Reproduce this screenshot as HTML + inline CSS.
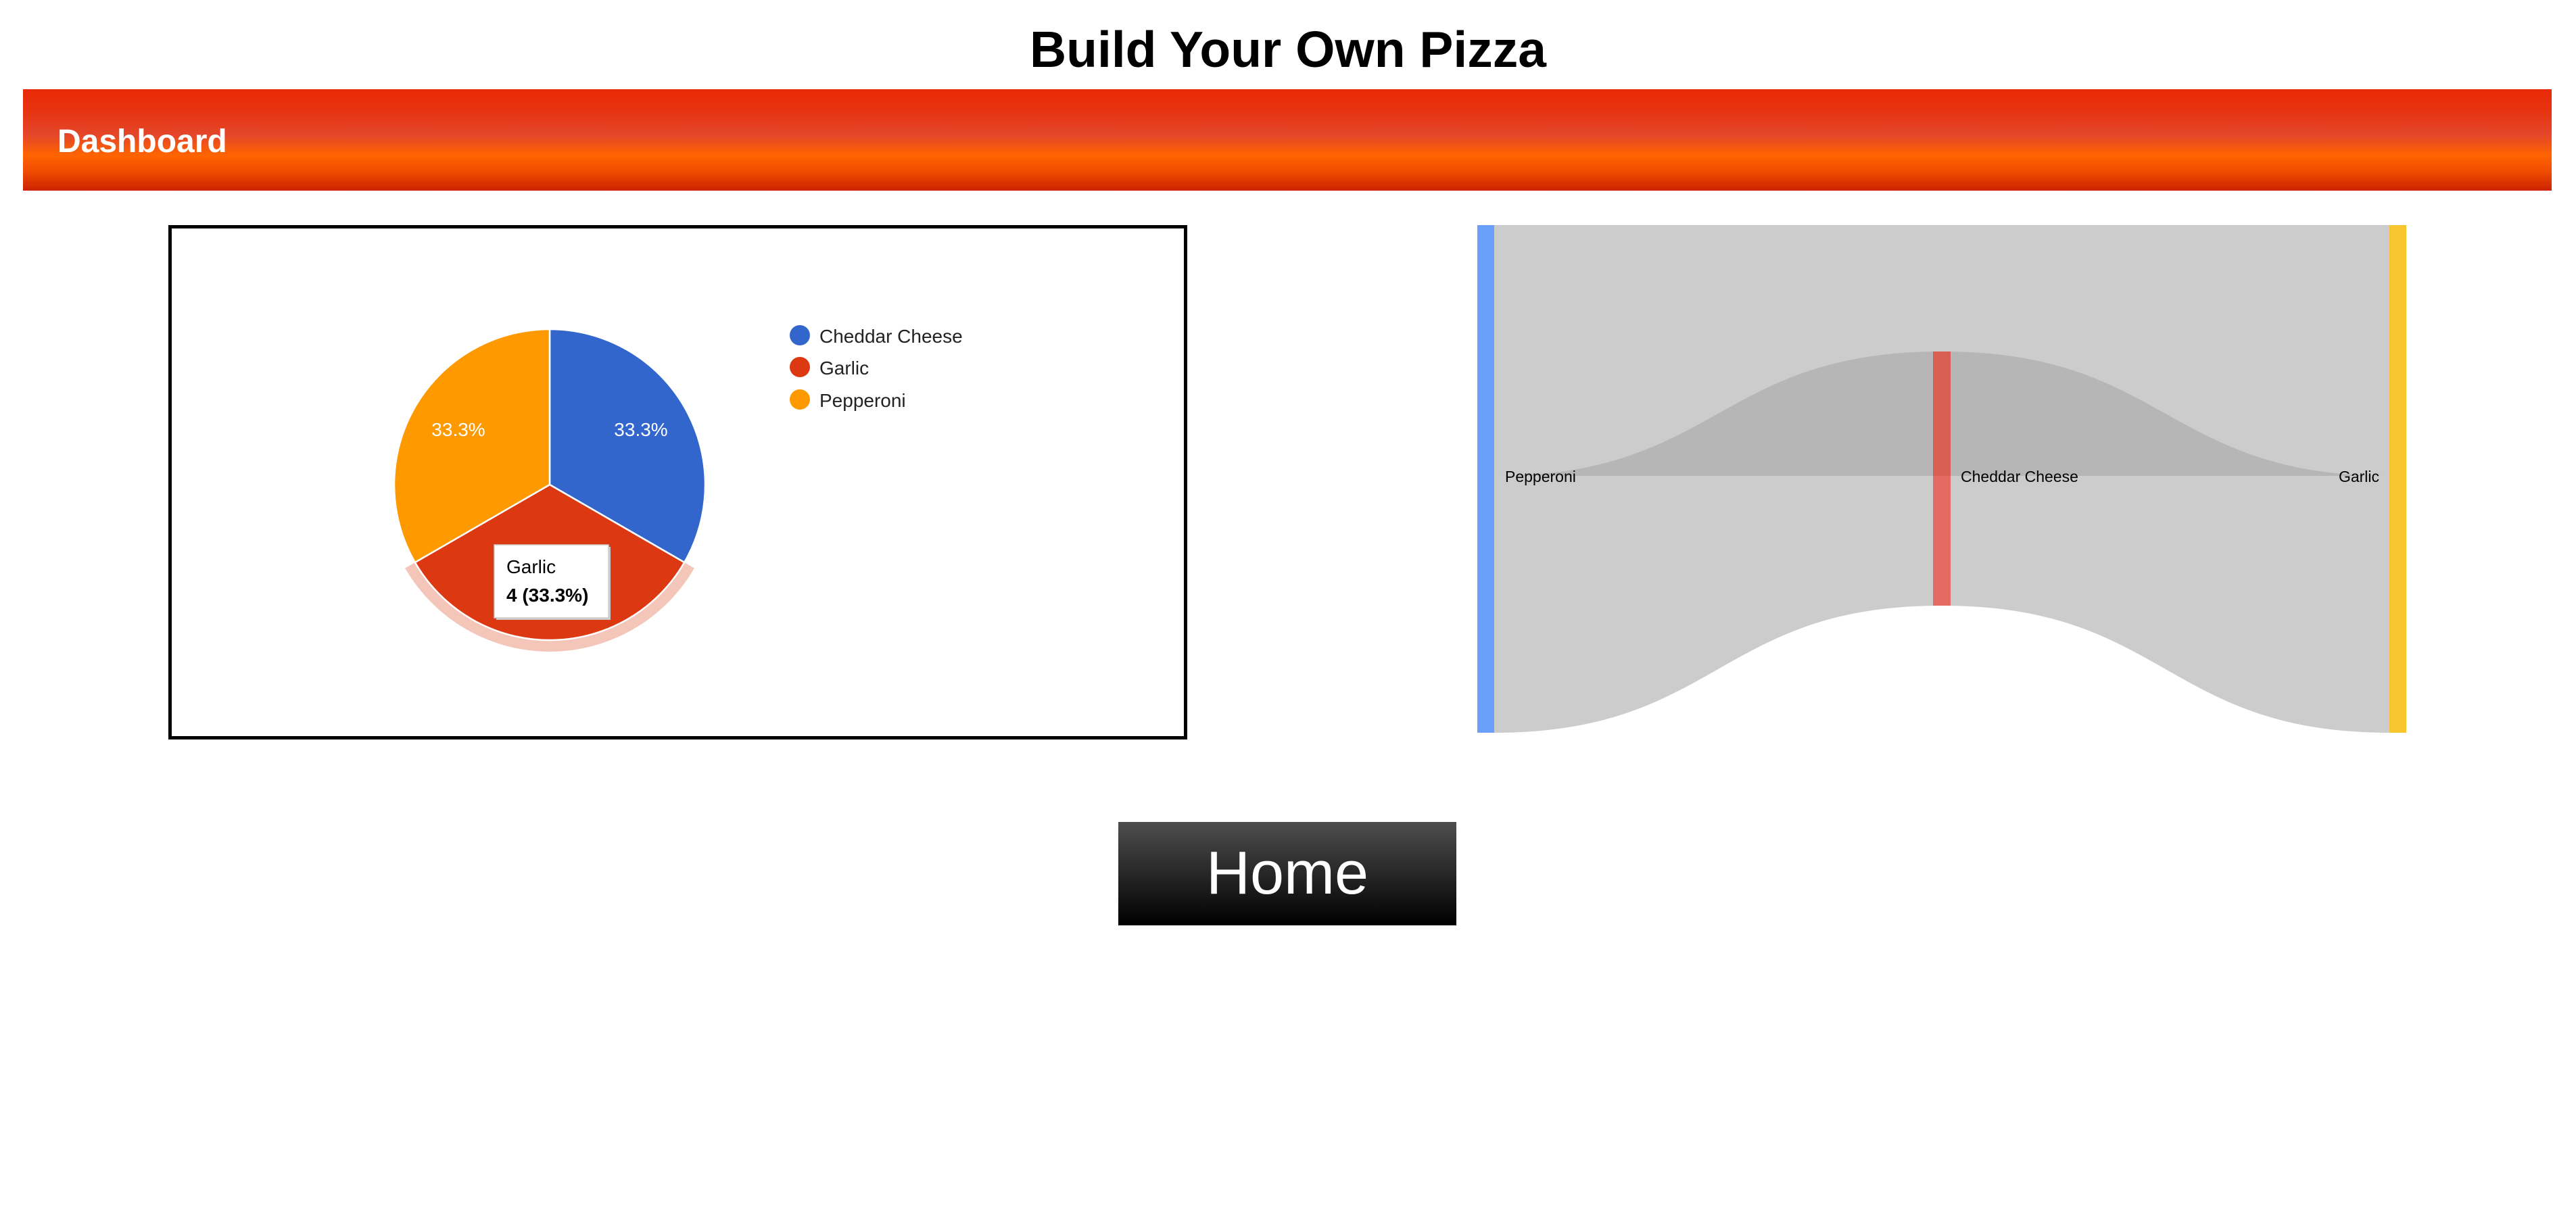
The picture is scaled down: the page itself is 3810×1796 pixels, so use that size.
<!DOCTYPE html>
<html><head><meta charset="utf-8"><style>
html,body{margin:0;padding:0;background:#fff;width:3810px;height:1796px;overflow:hidden;font-family:"Liberation Sans",Arial,sans-serif;}
.abs{position:absolute;}
#title{left:0;width:3810px;top:28px;text-align:center;font-weight:bold;font-size:75px;line-height:90px;color:#000;}
#bar{left:34px;top:132px;width:3740px;height:150px;background:linear-gradient(to bottom,#e92a06 0%,#e7320f 20%,#e4462a 45%,#ff6400 65%,#ee4a00 82%,#cc2200 100%);}
#dash{left:85px;top:178px;font-weight:bold;font-size:48px;color:#fff;line-height:64px;}
#box{left:249px;top:333px;width:1497px;height:751px;border:5px solid #000;}
#home{left:1654px;top:1216px;width:500px;height:153px;background:linear-gradient(to bottom,#4e4e4e,#000);color:#fff;font-size:90px;text-align:center;line-height:153px;}
</style></head><body>
<div id="title" class="abs">Build Your Own Pizza</div>
<div id="bar" class="abs"></div>
<div id="dash" class="abs">Dashboard</div>
<div id="box" class="abs"></div>
<svg class="abs" style="left:0;top:0" width="3810" height="1796" xmlns="http://www.w3.org/2000/svg">
  <!-- pie -->
  <path d="M1026.9,840.5 A247,247 0 0 1 599.1,840.5 L613.8,832 A230,230 0 0 0 1012.2,832 Z" fill="#f4c6b9"/>
  <path d="M813,717 L813,487 A230,230 0 0 1 1012.2,832 Z" fill="#3366cc" stroke="#fff" stroke-width="2.5"/>
  <path d="M813,717 L1012.2,832 A230,230 0 0 1 613.8,832 Z" fill="#dc3912" stroke="#fff" stroke-width="2.5"/>
  <path d="M813,717 L613.8,832 A230,230 0 0 1 813,487 Z" fill="#ff9900" stroke="#fff" stroke-width="2.5"/>
  <text x="948" y="645" fill="#fff" font-size="28" text-anchor="middle" font-family="Liberation Sans, Arial, sans-serif">33.3%</text>
  <text x="678" y="645" fill="#fff" font-size="28" text-anchor="middle" font-family="Liberation Sans, Arial, sans-serif">33.3%</text>
  <!-- tooltip -->
  <rect x="734" y="809" width="169" height="108" fill="#ccc"/>
  <rect x="731" y="806" width="169" height="108" fill="#fff" stroke="#ccc" stroke-width="1.5"/>
  <text x="749" y="848" font-size="28" fill="#000" font-family="Liberation Sans, Arial, sans-serif">Garlic</text>
  <text x="749" y="890" font-size="28" font-weight="bold" fill="#000" font-family="Liberation Sans, Arial, sans-serif">4 (33.3%)</text>
  <!-- legend -->
  <circle cx="1183" cy="496" r="15" fill="#3366cc"/>
  <circle cx="1183" cy="543" r="15" fill="#dc3912"/>
  <circle cx="1183" cy="591" r="15" fill="#ff9900"/>
  <g font-size="28" fill="#222" font-family="Liberation Sans, Arial, sans-serif">
    <text x="1212" y="507">Cheddar Cheese</text>
    <text x="1212" y="554">Garlic</text>
    <text x="1212" y="602">Pepperoni</text>
  </g>
  <!-- sankey -->
  <path d="M2210,333 L3534,333 L3534,1084 C3203,1084 3203,896 2872,896 C2541,896 2541,1084 2210,1084 Z" fill="#cccccc"/>
  <path d="M2210,704 C2541,704 2541,520 2872,520 C3203,520 3203,704 3534,704 Z" fill="#b6b6b6"/>
  <rect x="2185" y="333" width="25" height="751" fill="#6aa0f8"/>
  <rect x="3534" y="333" width="25" height="751" fill="#f6c530"/>
  <rect x="2859" y="520" width="26" height="184" fill="#d95f55"/>
  <rect x="2859" y="704" width="26" height="192" fill="#e46b63"/>
  <g font-size="23" fill="#000" font-family="Liberation Sans, Arial, sans-serif">
    <text x="2226" y="713">Pepperoni</text>
    <text x="2900" y="713">Cheddar Cheese</text>
    <text x="3519" y="713" text-anchor="end">Garlic</text>
  </g>
</svg>
<div id="home" class="abs">Home</div>
</body></html>
